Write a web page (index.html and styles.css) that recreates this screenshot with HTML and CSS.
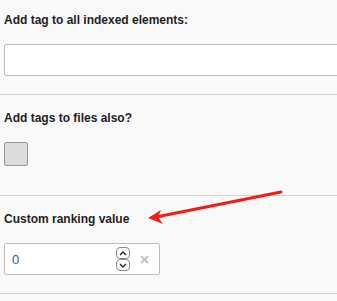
FILE: index.html
```html
<!DOCTYPE html>
<html lang="en">
<head>
<meta charset="utf-8">
<title>Indexing options</title>
<link rel="stylesheet" href="styles.css">
</head>
<body>
<div class="page">
  <section class="field first">
    <label class="label">Add tag to all indexed elements:</label>
    <input class="text-input" type="text">
  </section>
  <section class="field">
    <label class="label">Add tags to files also?</label>
    <span class="checkbox"></span>
  </section>
  <section class="field">
    <label class="label">Custom ranking value</label>
    <div class="number-input">
      <span class="value">0</span>
      <span class="spinner">
        <span class="spin up"><svg width="8" height="5" viewBox="0 0 8 5"><path d="M1 4 L4 1 L7 4" fill="none" stroke="#222" stroke-width="1.3"/></svg></span>
        <span class="spin down"><svg width="8" height="5" viewBox="0 0 8 5"><path d="M1 1 L4 4 L7 1" fill="none" stroke="#222" stroke-width="1.3"/></svg></span>
      </span>
      <span class="clear"><svg width="9" height="9" viewBox="0 0 9 9"><path d="M1 1 L8 8 M8 1 L1 8" stroke="#c4c4c4" stroke-width="2"/></svg></span>
    </div>
  </section>
  <svg class="arrow" width="337" height="301" viewBox="0 0 337 301">
    <line x1="281" y1="192" x2="156" y2="217" stroke="#f01e14" stroke-width="3" stroke-linecap="round"/>
    <path d="M148 218 L161 210 L158 217 L163 224 Z" fill="#f01e14"/>
  </svg>
</div>
</body>
</html>
```
FILE: styles.css
```css
html, body {
  margin: 0;
  padding: 0;
  background: #f9f9f9;
  overflow: hidden;
}
.page {
  position: relative;
  width: 337px;
  height: 301px;
  font-family: "Liberation Sans", Arial, sans-serif;
  color: #1e1e1e;
}
.field {
  display: flex;
  flex-direction: column;
  align-items: flex-start;
  padding: 15px 0 18px 4px;
  border-bottom: 1px solid #d2d2d2;
}
.field.first {
  padding-top: 12px;
}
.label {
  font-size: 12px;
  line-height: 16px;
  font-weight: bold;
  margin-bottom: 16px;
}
.text-input {
  box-sizing: border-box;
  width: 345px;
  height: 32px;
  margin: 0;
  border: 1px solid #bdbdbd;
  border-radius: 2px;
  background: #fff;
}
.checkbox {
  box-sizing: border-box;
  width: 24px;
  height: 24px;
  background: #dcdcdc;
  border: 1px solid #9a9a9a;
  border-radius: 2px;
  margin-bottom: 11px;
}
.number-input {
  box-sizing: border-box;
  width: 156px;
  height: 32px;
  border: 1px solid #bdbdbd;
  border-radius: 2px;
  background: #fff;
  display: flex;
  align-items: center;
  padding: 0 0 0 7px;
}
.value {
  flex: 1;
  font-size: 13px;
  color: #35559a;
}
.spinner {
  display: flex;
  flex-direction: column;
}
.spin {
  box-sizing: border-box;
  width: 14px;
  height: 12px;
  border: 1px solid #8a8a8a;
  border-radius: 4px;
  display: flex;
  align-items: center;
  justify-content: center;
  background: #fff;
}
.clear {
  width: 29px;
  display: flex;
  justify-content: center;
}
.arrow {
  position: absolute;
  left: 0;
  top: 0;
  pointer-events: none;
}
```
